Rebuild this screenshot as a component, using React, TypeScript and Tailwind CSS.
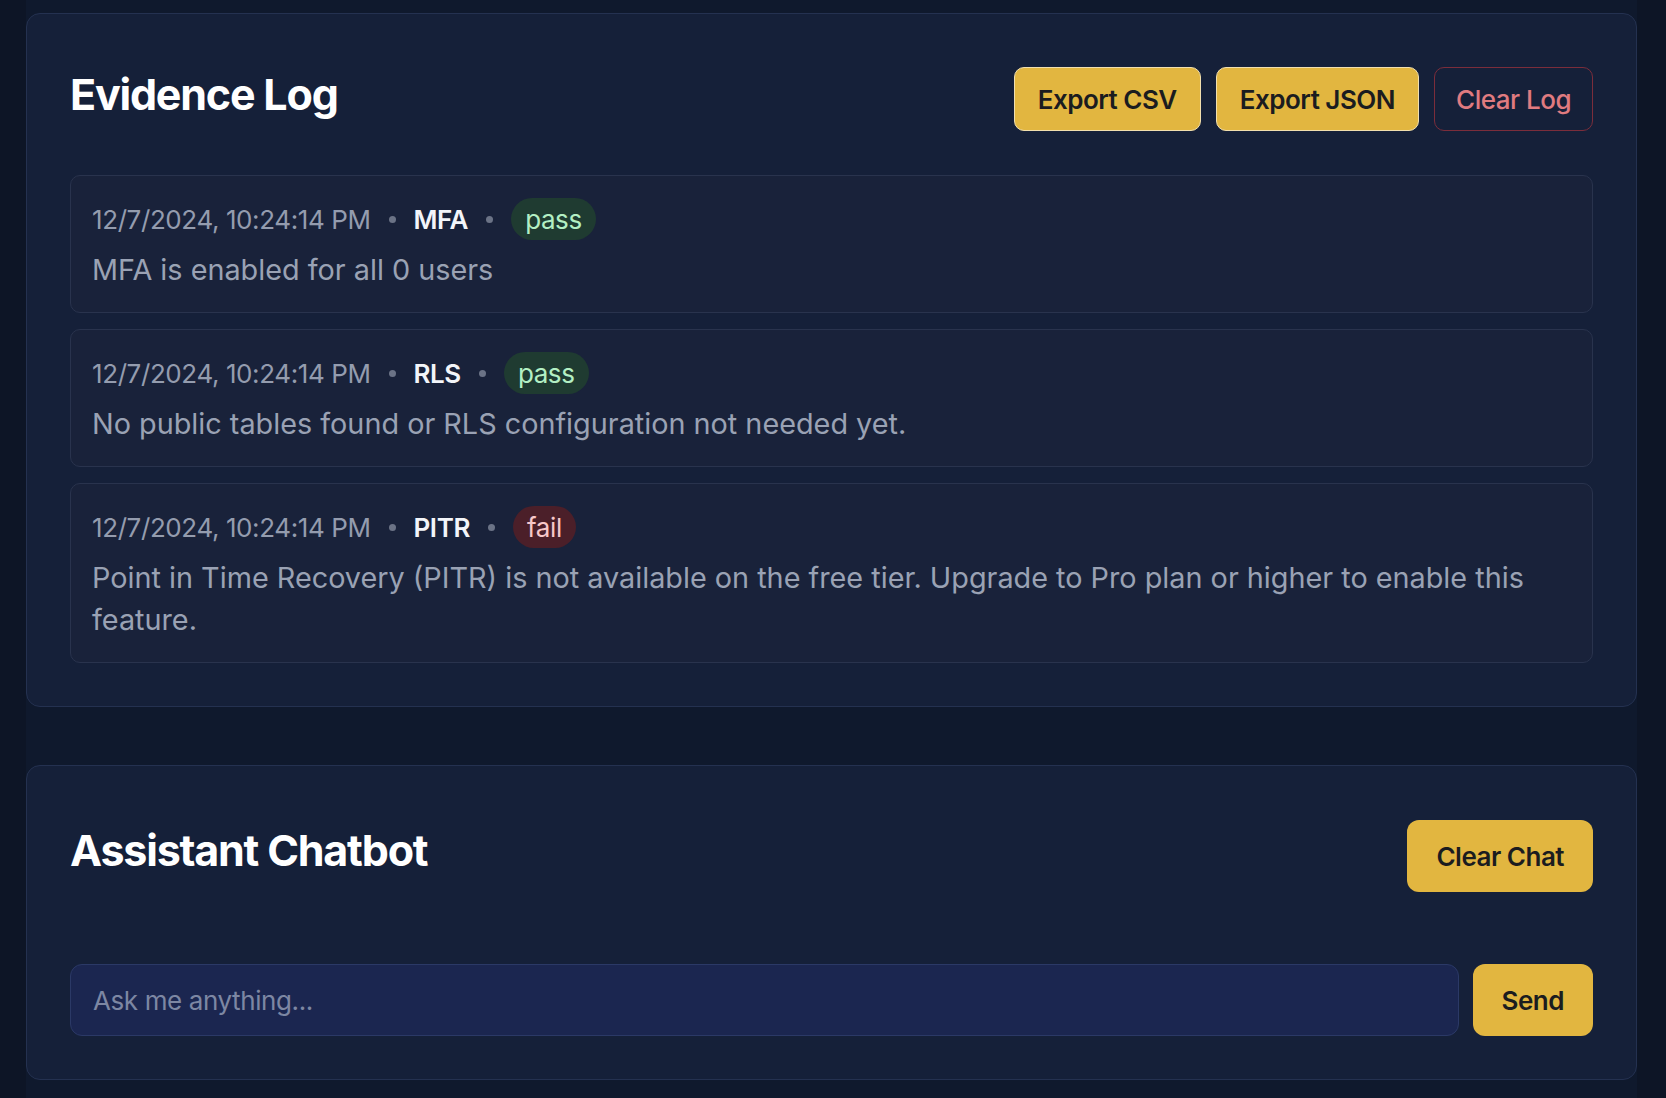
import React from "react";

type Entry = {
  time: string;
  check: string;
  status: "pass" | "fail";
  message: string;
};

const entries: Entry[] = [
  {
    time: "12/7/2024, 10:24:14 PM",
    check: "MFA",
    status: "pass",
    message: "MFA is enabled for all 0 users",
  },
  {
    time: "12/7/2024, 10:24:14 PM",
    check: "RLS",
    status: "pass",
    message: "No public tables found or RLS configuration not needed yet.",
  },
  {
    time: "12/7/2024, 10:24:14 PM",
    check: "PITR",
    status: "fail",
    message:
      "Point in Time Recovery (PITR) is not available on the free tier. Upgrade to Pro plan or higher to enable this feature.",
  },
];

const Dot = () => <span className="h-[7px] w-[7px] rounded-full bg-[#6b7386]" />;

const LogEntry = ({ entry }: { entry: Entry }) => (
  <div className="rounded-[10px] border border-[#29334d] bg-[#19223a] px-[21px] pt-[22px] pb-[21px]">
    <div className="flex h-[42px] items-center gap-[18px] text-[26px] tracking-[-0.4px]">
      <span className="text-[#949cae]">{entry.time}</span>
      <Dot />
      <span className="font-semibold text-[#f3f5f9]">{entry.check}</span>
      <Dot />
      <span
        className={`flex h-[42px] items-center rounded-full px-[14px] ${
          entry.status === "pass"
            ? "bg-[#1f3b31] text-[#b3efc3]"
            : "bg-[#4b1f29] text-[#f7c7c9]"
        }`}
      >
        {entry.status}
      </span>
    </div>
    <p className="mt-[9px] text-[28.8px] leading-[42px] text-[#9aa2b4]">
      {entry.message}
    </p>
  </div>
);

const App: React.FC = () => {
  return (
    <div className="min-h-screen bg-[#0d1526] font-['Inter',sans-serif]">
      <div className="ml-[26px] mr-[29px] flex flex-col gap-[58px] bg-[#0f192d] pt-[13px] pb-[18px]">
        {/* Evidence log */}
        <section className="rounded-[14px] border border-[#243150] bg-[#152039] px-[43px] pt-[50px] pb-[43px]">
          <div className="flex items-start justify-between">
            <h2 className="text-[43px] font-bold leading-[60px] tracking-[-1.2px] text-white">
              Evidence Log
            </h2>
            <div className="mt-[3px] flex gap-[15px]">
              <button className="h-[64px] rounded-[10px] border border-[#f1dfae] bg-[#e2b640] px-[23px] text-[26px] font-semibold tracking-[-0.5px] text-[#1b1c1f]">
                Export CSV
              </button>
              <button className="h-[64px] rounded-[10px] border border-[#f1dfae] bg-[#e2b640] px-[23px] text-[26px] font-semibold tracking-[-0.5px] text-[#1b1c1f]">
                Export JSON
              </button>
              <button className="h-[64px] rounded-[10px] border border-[#7b2d3b] px-[21px] text-[26px] font-medium tracking-[-0.5px] text-[#e07b80]">
                Clear Log
              </button>
            </div>
          </div>

          <div className="mt-[44px] flex flex-col gap-[16px]">
            {entries.map((e) => (
              <LogEntry key={e.check} entry={e} />
            ))}
          </div>
        </section>

        {/* Chatbot */}
        <section className="rounded-[14px] border border-[#243150] bg-[#152039] px-[43px] pt-[54px] pb-[43px]">
          <div className="flex items-start justify-between">
            <h2 className="text-[43px] font-bold leading-[60px] tracking-[-1.2px] text-white">
              Assistant Chatbot
            </h2>
            <button className="h-[72px] rounded-[12px] bg-[#e2b640] px-[29px] text-[26px] font-semibold tracking-[-0.5px] text-[#1b1c1f]">
              Clear Chat
            </button>
          </div>

          <div className="mt-[72px] flex gap-[14px]">
            <input
              className="h-[72px] flex-1 rounded-[12px] border border-[#2b3966] bg-[#1b2650] px-[22px] text-[26px] tracking-[-0.4px] text-white outline-none placeholder:text-[#7d87a3]"
              placeholder="Ask me anything..."
            />
            <button className="h-[72px] rounded-[12px] bg-[#e2b640] px-[29px] text-[26px] font-semibold tracking-[-0.5px] text-[#1b1c1f]">
              Send
            </button>
          </div>
        </section>
      </div>
    </div>
  );
};

export default App;
